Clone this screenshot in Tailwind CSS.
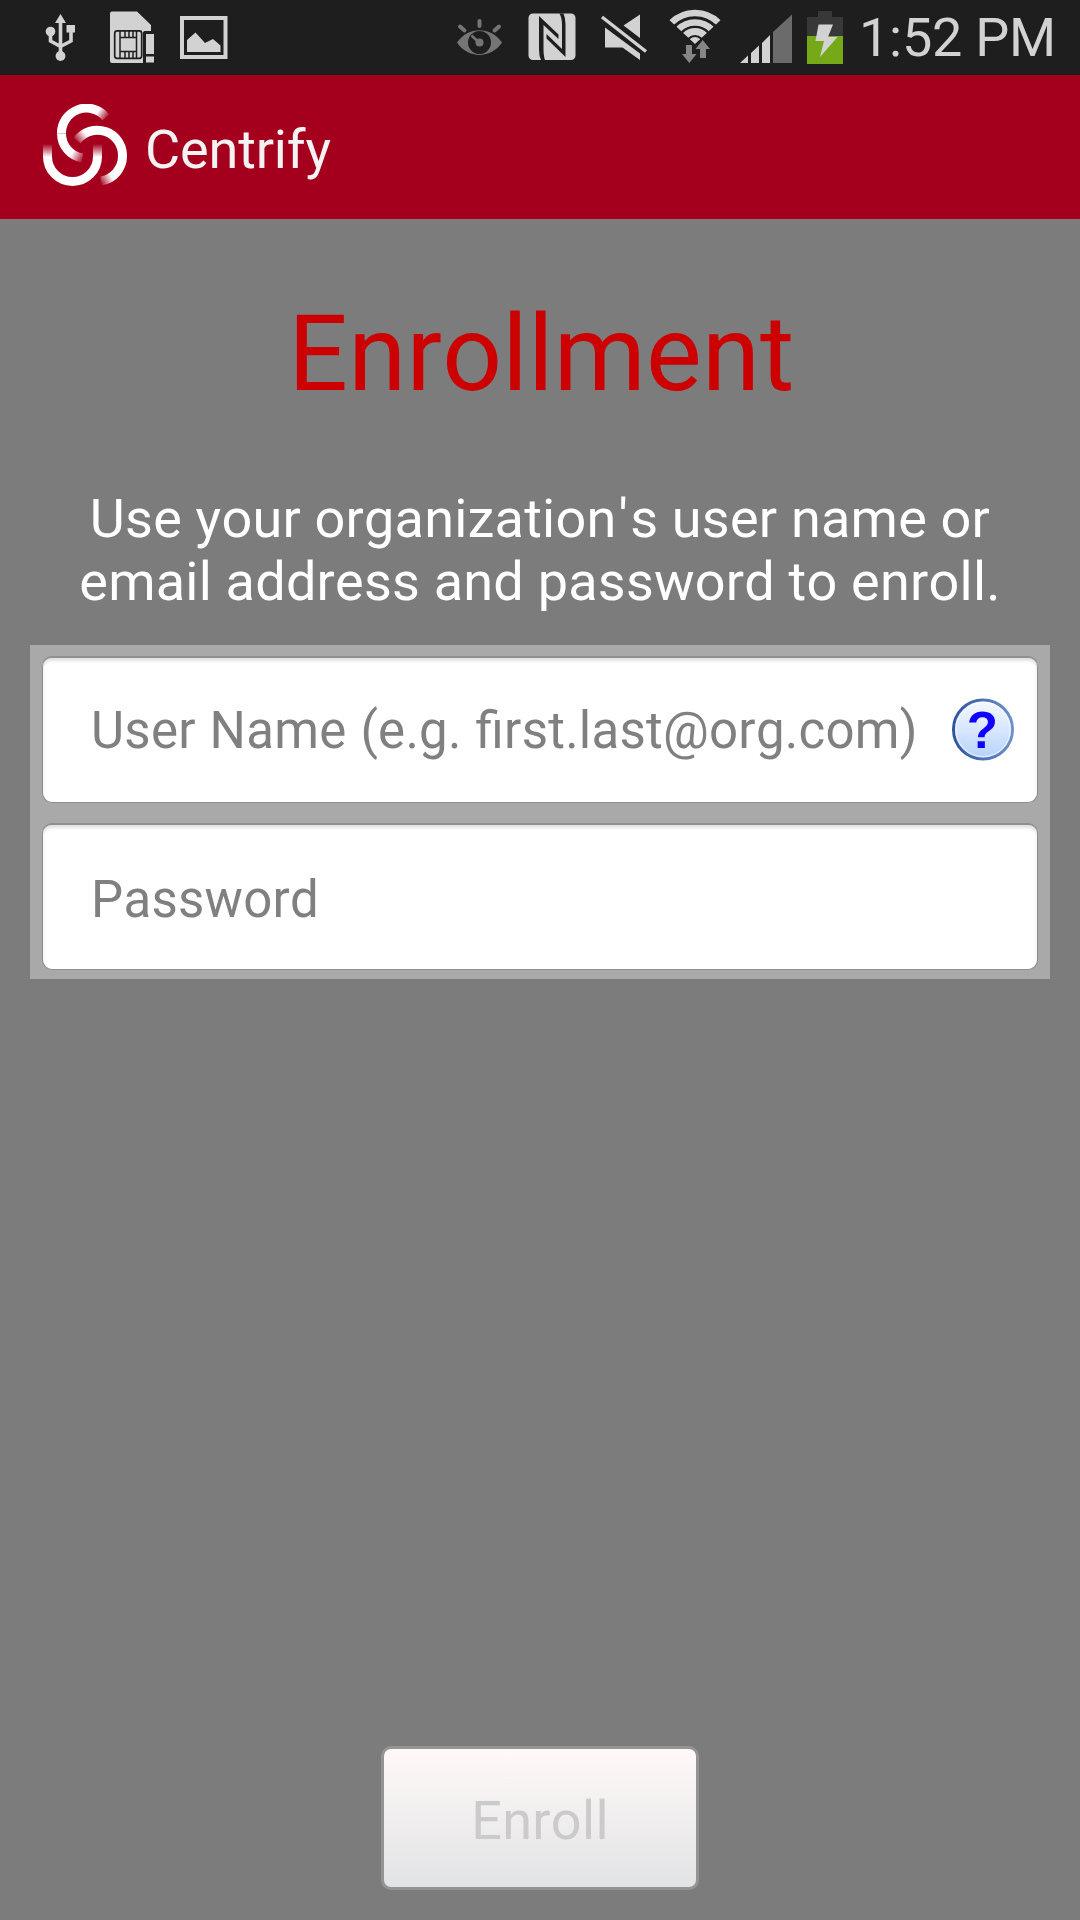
<!DOCTYPE html>
<html lang="en"><head><meta charset="utf-8"><title>Centrify</title>
<script src="https://cdn.jsdelivr.net/npm/@tailwindcss/browser@4"></script></head>
<body class="w-[1080px] h-[1920px] overflow-hidden bg-[#7c7c7c] font-[Roboto,sans-serif] [font-kerning:none] flex flex-col">
<header class="h-[75px] bg-[#1e1e1e] flex shrink-0">
<svg class="w-[850px] h-[75px] shrink-0" viewBox="0 0 850 75">
<!-- USB -->
<g fill="none" stroke="#d2d2d2" stroke-width="3.6"><path d="M60.500 20V52M50.500 32V41L60.500 46.500M71 30V41L60.500 46.500"/></g>
<g fill="#d2d2d2"><path d="M60.500 14L66 23H55Z"/><circle cx="50.500" cy="31.500" r="4.800"/><path d="M66.500 25H75V32.500H66.500Z"/><circle cx="60.500" cy="56" r="4.900"/></g>
<!-- SIM card -->
<path fill="#d2d2d2" d="M112 11.500H137L151 25V31H145C143.500 31 143 32 143 33V63H112Q110 63 110 61V13.500Q110 11.500 112 11.500Z"/>
<rect x="114.700" y="30.800" width="27" height="27.500" rx="2.500" fill="#d2d2d2" stroke="#1e1e1e" stroke-width="1.700"/>
<path fill="none" stroke="#1e1e1e" stroke-width="1.500" d="M120 31V58M136.500 31V58M120 37.500H136.500M120 51.500H136.500M125 31V37.500M129 31V37.500M133 31V37.500M125 51.500V58M129 51.500V58M133 51.500V58"/>
<path fill="#d2d2d2" d="M146 34H154V54H146ZM146 56.500H154V62.500H146Z"/>
<!-- Picture -->
<path fill="none" stroke="#d2d2d2" stroke-width="4" d="M182 18H225.500V57H182Z"/>
<path fill="#d2d2d2" d="M187 40L195.500 32.500L205 43L213 39L220.500 45.500V52H187Z"/>
<!-- Smart stay eye -->
<path fill="none" stroke="#757575" stroke-width="4" stroke-linecap="round" d="M479.500 21V26M460 26.500L464.500 30.500M499 26.500L494.500 30.500"/>
<path fill="#757575" fill-rule="evenodd" d="M457 42.500C468 26 491 26 502 42.500C491 59 468 59 457 42.500ZM468 42.500A11.500 11.500 0 1 0 491 42.500A11.500 11.500 0 1 0 468 42.500Z"/>
<circle cx="479.500" cy="42.500" r="4" fill="#757575"/><path stroke="#757575" stroke-width="2.500" d="M471.500 35.500L479 42.500"/>
<!-- NFC -->
<rect x="528.500" y="13.500" width="47" height="46.500" rx="4.500" fill="#d2d2d2"/>
<path fill="#1e1e1e" d="M539 16L558.500 34.500V39L543.500 25V49Q543.500 56 545 60H541Q539 56 539 50ZM565.500 57L546.500 38.500V34L562 49V25Q562 18 559.500 13.500H563.500Q565.500 18 565.500 24Z"/>
<!-- Muted speaker -->
<path fill="#d2d2d2" d="M605 27.500L640 53.500V60L622.500 47.500H605ZM623.500 25.500L640 14.500V38Z"/>
<path stroke="#d2d2d2" stroke-width="3.400" d="M602 17L646 51.500"/>
<!-- Wi-Fi -->
<clipPath id="fan"><path d="M695 44L665 16V0H725V16Z"/></clipPath>
<g clip-path="url(#fan)" fill="none" stroke="#d2d2d2"><circle cx="695" cy="44" r="3.500" stroke-width="7"/><circle cx="695" cy="45" r="13.500" stroke-width="7"/><circle cx="695" cy="46" r="23.500" stroke-width="6.500"/><circle cx="695" cy="46.500" r="33.500" stroke-width="6.500"/></g>
<path fill="#868686" d="M686 45H692V54H696.500L689.300 63L682 54H686ZM700 58V49H695.500L702.700 40L710 49H706V58Z"/>
<!-- Signal -->
<path fill="#d2d2d2" d="M740 63L748 55.500V63ZM751 53L759 45.500V63H751ZM762 43L770 35V63H762Z"/><path fill="#6b6b6b" d="M773 32L792 14.500V63H773Z"/>
<!-- Battery -->
<path fill="#383838" d="M818 11H832V17H843V36H807V17H818Z"/><path fill="#76a917" d="M807 36H843V64H807Z"/><path fill="#d2d2d2" d="M818.500 24.500H833L828 37H837.500L820 57L824 41H815.500Z"/>
</svg>
<span class="ml-[9px] pt-[6px] text-[54px] leading-[63px] tracking-[-0.25px] text-[#d2d2d2] whitespace-nowrap">1:52 PM</span>
</header>
<div class="h-[144px] shrink-0 bg-[#a4001d] flex items-start">
<svg class="w-[84px] h-[84px] ml-[43px] mt-[29px] shrink-0" viewBox="0 0 84 84" fill="none" stroke-width="9">
<defs>
<linearGradient id="a" gradientUnits="userSpaceOnUse" x1="65" y1="14" x2="55" y2="7"><stop stop-color="#fff" stop-opacity="0"/><stop offset="1" stop-color="#fff"/></linearGradient>
<linearGradient id="a2" gradientUnits="userSpaceOnUse" x1="41" y1="56" x2="29" y2="49"><stop stop-color="#fff" stop-opacity="0"/><stop offset="1" stop-color="#fff"/></linearGradient>
<linearGradient id="b" gradientUnits="userSpaceOnUse" x1="32" y1="38" x2="43" y2="30"><stop stop-color="#fff" stop-opacity="0"/><stop offset="1" stop-color="#fff"/></linearGradient>
<linearGradient id="b2" gradientUnits="userSpaceOnUse" x1="57" y1="80" x2="69" y2="73"><stop stop-color="#fff" stop-opacity="0"/><stop offset="1" stop-color="#fff"/></linearGradient>
<linearGradient id="c" gradientUnits="userSpaceOnUse" x1="0" y1="40" x2="0" y2="53"><stop stop-color="#fff" stop-opacity="0"/><stop offset="1" stop-color="#fff"/></linearGradient>
</defs>
<path stroke="url(#a)" d="M63 13.500A25 25 0 0 0 18.500 29.500"/>
<path stroke="url(#a2)" d="M18.500 29.400A25 25 0 0 0 39.500 54"/>
<path stroke="url(#b)" d="M34 36.500A25.200 25.200 0 0 1 79.500 52"/>
<path stroke="url(#b2)" d="M79.500 51.900A25.200 25.200 0 0 1 58 77"/>
<path stroke="url(#c)" d="M4.500 40V52.500A25 25 0 0 0 54.500 52.500V40"/>
</svg>
<span class="ml-[18px] mt-[43px] text-[54px] leading-[63px] tracking-[-0.15px] text-[#f3f3f3] whitespace-nowrap">Centrify</span>
</div>
<main class="grow flex flex-col items-center px-[30px]">
<h1 class="mt-[74px] pl-[3px] text-[105px] leading-[123px] tracking-[0.2px] text-[#cc0000]">Enrollment</h1>
<p class="mt-[71px] text-[54px] leading-[63px] tracking-[0.22px] text-white text-center whitespace-nowrap">Use your organization<span class="px-[2px]">'</span>s user name or<br>email address and password to enroll.</p>
<form class="mt-[32px] w-[1020px] h-[334px] bg-[#a9a9a9] pt-[11px] px-[12px] flex flex-col gap-[20px] text-[51px] leading-[60px] tracking-[0.25px] text-[#808080]">
<div class="h-[147px] shrink-0 rounded-[10px] border border-[#8f8f8f] border-t-2 bg-white shadow-[inset_0_3px_3px_#e2e2e2] flex items-start pl-[48px] pr-[22px] justify-between whitespace-nowrap">
<span class="pt-[43px] [word-spacing:1px] [font-feature-settings:'liga']">User Name (e.g. first.last@org.com)</span>
<svg class="w-[63px] h-[63px] mt-[40px] shrink-0" viewBox="0 0 63 63">
<defs><linearGradient id="q" x1="0" y1="0" x2="0" y2="1"><stop stop-color="#f4f9ff"/><stop offset=".45" stop-color="#dbe9fd"/><stop offset="1" stop-color="#b5d2fb"/></linearGradient>
<linearGradient id="qr" x1="0" y1="0" x2="1" y2="0"><stop stop-color="#2d559f"/><stop offset="1" stop-color="#6f90c8"/></linearGradient></defs>
<circle cx="31" cy="31.500" r="29.500" fill="url(#q)" stroke="url(#qr)" stroke-width="3"/><circle cx="31" cy="31.500" r="27.300" fill="none" stroke="#fff" stroke-opacity=".5" stroke-width="1.600"/>
<text x="30.500" y="49.500" text-anchor="middle" font-family="Liberation Sans" font-weight="700" font-size="51" fill="#1000ff">?</text></svg>
</div>
<div class="h-[147px] shrink-0 rounded-[10px] border border-[#8f8f8f] border-t-2 bg-white shadow-[inset_0_3px_3px_#e2e2e2] pl-[48px] pt-[45px]">Password</div>
</form>
<button class="mt-auto mb-[30px] w-[318px] h-[144px] pt-[5px] rounded-[10px] border-[3px] border-[#949494] bg-linear-to-b from-[#fff9f8] to-[#e2e3e5] text-[54px] leading-[63px] tracking-[0.3px] text-[#cbcbcb]">Enroll</button>
</main>
</body></html>
